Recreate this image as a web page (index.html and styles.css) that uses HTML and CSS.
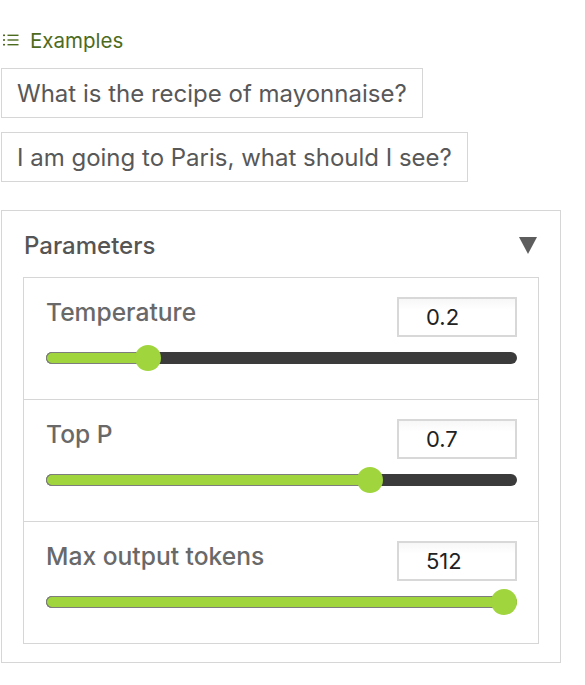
FILE: index.html
```html
<!DOCTYPE html>
<html>
<head>
<meta charset="utf-8">
<link rel="stylesheet" href="styles.css">
</head>
<body>
<div class="page">
  <div class="examples-head">
    <svg class="list-icon" width="16" height="12" viewBox="0 0 16 12">
      <rect x="0" y="0.5" width="2" height="1.6" fill="#4d6b1e"/>
      <rect x="0" y="5.2" width="2" height="1.6" fill="#4d6b1e"/>
      <rect x="0" y="9.9" width="2" height="1.6" fill="#4d6b1e"/>
      <rect x="4.5" y="0.6" width="11" height="1.4" fill="#4d6b1e"/>
      <rect x="4.5" y="5.3" width="11" height="1.4" fill="#4d6b1e"/>
      <rect x="4.5" y="10" width="11" height="1.4" fill="#4d6b1e"/>
    </svg>
    <span>Examples</span>
  </div>
  <div class="example-list">
    <div class="example">What is the recipe of mayonnaise?</div>
    <div class="example">I am going to Paris, what should I see?</div>
  </div>
  <div class="panel">
    <div class="panel-head">
      <span class="panel-title">Parameters</span>
      <svg class="caret" width="18" height="17" viewBox="0 0 18 17"><polygon points="0,0 18,0 9,17" fill="#5d5d5d"/></svg>
    </div>
    <div class="params">
      <div class="param">
        <div class="param-head">
          <span class="param-label">Temperature</span>
          <div class="num">0.2</div>
        </div>
        <div class="slider">
          <div class="fill" style="width: calc(13px + 0.2 * (100% - 26px));"></div>
          <div class="thumb" style="left: calc(0.2 * (100% - 26px));"></div>
        </div>
      </div>
      <div class="param">
        <div class="param-head">
          <span class="param-label">Top P</span>
          <div class="num">0.7</div>
        </div>
        <div class="slider">
          <div class="fill" style="width: calc(13px + 0.7 * (100% - 26px));"></div>
          <div class="thumb" style="left: calc(0.7 * (100% - 26px));"></div>
        </div>
      </div>
      <div class="param">
        <div class="param-head">
          <span class="param-label">Max output tokens</span>
          <div class="num">512</div>
        </div>
        <div class="slider">
          <div class="fill" style="width: calc(13px + 1 * (100% - 26px));"></div>
          <div class="thumb" style="left: calc(1 * (100% - 26px));"></div>
        </div>
      </div>
    </div>
  </div>
</div>
</body>
</html>
```
FILE: styles.css
```css
* { box-sizing: border-box; }
html, body { margin: 0; padding: 0; background: #ffffff; }
body {
  font-family: Inter, "Noto Sans", "Liberation Sans", sans-serif;
  color: #555555;
}
.page {
  width: 561px;
  padding: 28px 0 0 1px;
  display: flex;
  flex-direction: column;
}
.examples-head {
  display: flex;
  align-items: center;
  gap: 11px;
  height: 24px;
  padding-left: 2px;
  color: #4d6b1e;
  font-size: 20.5px;
}
.list-icon { flex: none; }
.example-list {
  margin-top: 16px;
  display: flex;
  flex-direction: column;
  align-items: flex-start;
  gap: 14px;
}
.example {
  height: 50px;
  border: 1px solid #d6d6d6;
  padding: 0 15px 0 15px;
  display: flex;
  align-items: center;
  font-size: 24px;
  color: #585858;
  white-space: nowrap;
}
.panel {
  margin-top: 28px;
  border: 1px solid #d6d6d6;
  padding: 0 21px 18px 21px;
  display: flex;
  flex-direction: column;
}
.panel-head {
  height: 66px;
  padding-top: 3px;
  display: flex;
  align-items: center;
  justify-content: space-between;
  padding-left: 1px;
  padding-right: 2px;
}
.panel-title {
  font-size: 24px;
  font-weight: 500;
  color: #555555;
}
.params {
  border: 1px solid #d6d6d6;
  display: flex;
  flex-direction: column;
}
.param {
  padding: 19px 21px 28px 22px;
  display: flex;
  flex-direction: column;
}
.param + .param { border-top: 1px solid #d6d6d6; }
.param-head {
  height: 40px;
  display: flex;
  justify-content: space-between;
  align-items: flex-start;
}
.param-label {
  font-size: 24.6px;
  font-weight: 500;
  color: #696969;
  margin-top: 0;
}
.num {
  width: 120px;
  height: 40px;
  border: 2px solid #d8d8d8;
  background: linear-gradient(#f7f7f7, #ffffff 30%);
  display: flex;
  align-items: center;
  justify-content: flex-start;
  padding-left: 27px;
  font-size: 22px;
  color: #222222;
}
.slider {
  position: relative;
  margin-top: 8px;
  height: 26px;
  display: flex;
  align-items: center;
}
.slider::before {
  content: "";
  position: absolute;
  left: 0;
  right: 0;
  top: 7px;
  height: 12px;
  border-radius: 6px;
  background: #3b3b3b;
}
.fill {
  position: relative;
  height: 12px;
  border-radius: 6px 0 0 6px;
  background: #a0d53d;
  border: 1px solid #7d7d7d;
  border-right: none;
}
.thumb {
  position: absolute;
  top: 0;
  width: 26px;
  height: 26px;
  border-radius: 50%;
  background: #a0d53d;
}
```
